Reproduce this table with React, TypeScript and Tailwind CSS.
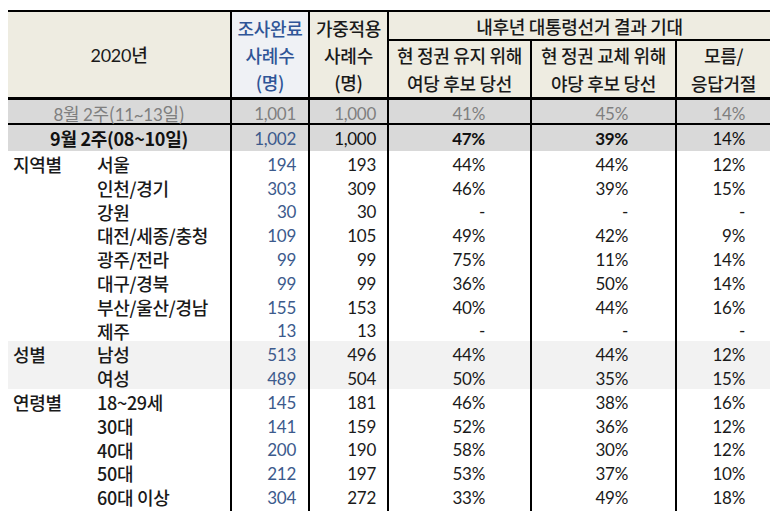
import React from 'react'

const grid = 'grid grid-cols-[222px_78px_79px_143px_145px_95px]'
const num = "font-['Lato','Noto_Sans_CJK_KR',sans-serif] font-normal text-[17px]"

const rows = [
  { cat: '지역별', sub: '서울', n: '194', w: '193', a: '44%', b: '44%', c: '12%' },
  { cat: '', sub: '인천/경기', n: '303', w: '309', a: '46%', b: '39%', c: '15%' },
  { cat: '', sub: '강원', n: '30', w: '30', a: '-', b: '-', c: '-' },
  { cat: '', sub: '대전/세종/충청', n: '109', w: '105', a: '49%', b: '42%', c: '9%' },
  { cat: '', sub: '광주/전라', n: '99', w: '99', a: '75%', b: '11%', c: '14%' },
  { cat: '', sub: '대구/경북', n: '99', w: '99', a: '36%', b: '50%', c: '14%' },
  { cat: '', sub: '부산/울산/경남', n: '155', w: '153', a: '40%', b: '44%', c: '16%' },
  { cat: '', sub: '제주', n: '13', w: '13', a: '-', b: '-', c: '-' },
  { cat: '성별', sub: '남성', n: '513', w: '496', a: '44%', b: '44%', c: '12%', shade: true },
  { cat: '', sub: '여성', n: '489', w: '504', a: '50%', b: '35%', c: '15%', shade: true },
  { cat: '연령별', sub: '18~29세', n: '145', w: '181', a: '46%', b: '38%', c: '16%' },
  { cat: '', sub: '30대', n: '141', w: '159', a: '52%', b: '36%', c: '12%' },
  { cat: '', sub: '40대', n: '200', w: '190', a: '58%', b: '30%', c: '12%' },
  { cat: '', sub: '50대', n: '212', w: '197', a: '53%', b: '37%', c: '10%' },
  { cat: '', sub: '60대 이상', n: '304', w: '272', a: '33%', b: '49%', c: '18%' },
]

export default function App() {
  return (
    <div className="min-h-screen w-[778px] bg-white text-[18px] tracking-[-0.3px] text-[#1a1a1a] font-medium font-['Noto_Sans_CJK_KR',sans-serif]">
      <div className="ml-[8px] pt-[10px] w-[762px]">
        {/* Header */}
        <div className={`${grid} grid-rows-[29px_28px_28px] border-t-2 border-b-[3px] border-black bg-[#eeece1] leading-none`}>
          <div className="row-span-3 flex items-center justify-center">
            <span>
              <span className={`${num} text-[18px]`}>2020</span>년
            </span>
          </div>
          <div className="row-span-3 flex flex-col items-center justify-center gap-[9px] border-l-2 border-black bg-[#eff1f5] text-[#2f5597]">
            <span>조사완료</span>
            <span>사례수</span>
            <span>(명)</span>
          </div>
          <div className="row-span-3 flex flex-col items-center justify-center gap-[9px] border-l-2 border-black">
            <span>가중적용</span>
            <span>사례수</span>
            <span>(명)</span>
          </div>
          <div className="col-span-3 flex items-center justify-center border-l-2 border-b-2 border-black">
            내후년 대통령선거 결과 기대
          </div>
          <div className="row-span-2 flex flex-col items-center justify-center gap-[10px] border-l-2 border-black whitespace-nowrap">
            <span>현 정권 유지 위해</span>
            <span>여당 후보 당선</span>
          </div>
          <div className="row-span-2 flex flex-col items-center justify-center gap-[10px] border-l-2 border-black whitespace-nowrap">
            <span>현 정권 교체 위해</span>
            <span>야당 후보 당선</span>
          </div>
          <div className="row-span-2 flex flex-col items-center justify-center gap-[10px] border-l-2 border-black">
            <span>모름/</span>
            <span>응답거절</span>
          </div>
        </div>

        {/* Previous wave */}
        <div className={`${grid} h-[25px] items-stretch border-b-2 border-black bg-[#d9d9d9] text-[#7f7f7f]`}>
          <div className="flex items-center justify-center font-normal">
            <span>
              <span className={num}>8</span>월 <span className={num}>2</span>주(<span className={num}>11~13</span>일)
            </span>
          </div>
          <div className={`flex items-center justify-end pr-[12px] border-l-2 border-black ${num}`}>1,001</div>
          <div className={`flex items-center justify-end pr-[11px] border-l-2 border-black ${num}`}>1,000</div>
          <div className={`flex items-center justify-end pr-[45px] border-l-2 border-black ${num}`}>41%</div>
          <div className={`flex items-center justify-end pr-[47px] border-l-2 border-black ${num}`}>45%</div>
          <div className={`flex items-center justify-end pr-[25px] border-l-2 border-black ${num}`}>14%</div>
        </div>

        {/* Current wave */}
        <div className={`${grid} h-[26px] bg-[#d9d9d9] text-[#111]`}>
          <div className="flex items-center justify-center font-bold">9월 2주(08~10일)</div>
          <div className={`flex items-center justify-end pr-[12px] border-l-2 border-black text-[#3c5a8c] ${num}`}>1,002</div>
          <div className={`flex items-center justify-end pr-[11px] border-l-2 border-black ${num}`}>1,000</div>
          <div className="flex items-center justify-end pr-[45px] border-l-2 border-black text-[17px] font-['Lato',sans-serif] font-bold">47%</div>
          <div className="flex items-center justify-end pr-[47px] border-l-2 border-black text-[17px] font-['Lato',sans-serif] font-bold">39%</div>
          <div className={`flex items-center justify-end pr-[25px] border-l-2 border-black ${num}`}>14%</div>
        </div>

        {/* Breakdown */}
        {rows.map((r, i) => (
          <div key={i} className={`${grid} h-[23.8px] ${r.shade ? 'bg-[#f2f2f2]' : 'bg-white'}`}>
            <div className="flex items-center whitespace-nowrap">
              <span className="w-[89px] pl-[5px]">{r.cat}</span>
              <span>{r.sub}</span>
            </div>
            <div className={`flex items-center justify-end pr-[12px] border-l-2 border-black text-[#3c5a8c] ${num}`}>{r.n}</div>
            <div className={`flex items-center justify-end pr-[11px] border-l-2 border-black ${num}`}>{r.w}</div>
            <div className={`flex items-center justify-end pr-[45px] border-l-2 border-black ${num}`}>{r.a}</div>
            <div className={`flex items-center justify-end pr-[47px] border-l-2 border-black ${num}`}>{r.b}</div>
            <div className={`flex items-center justify-end pr-[25px] border-l-2 border-black ${num}`}>{r.c}</div>
          </div>
        ))}
      </div>
    </div>
  )
}
